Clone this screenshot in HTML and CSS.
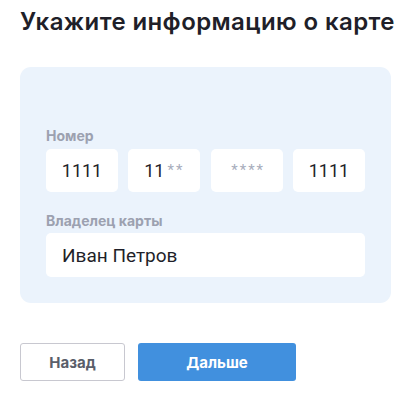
FILE: index.html
```html
<!DOCTYPE html>
<html lang="ru">
<head>
<meta charset="utf-8">
<title>Карта</title>
<link rel="stylesheet" href="styles.css">
</head>
<body>
<main class="page">
  <h1 class="title">Укажите информацию о карте</h1>
  <section class="card">
    <div class="field">
      <div class="label">Номер</div>
      <div class="number-row">
        <div class="input input--center">1111</div>
        <div class="input input--center">11<span class="mask">**</span></div>
        <div class="input input--center"><span class="mask">****</span></div>
        <div class="input input--center">1111</div>
      </div>
    </div>
    <div class="field field--owner">
      <div class="label">Владелец карты</div>
      <div class="input input--wide">Иван Петров</div>
    </div>
  </section>
  <div class="actions">
    <button class="btn btn--back">Назад</button>
    <button class="btn btn--next">Дальше</button>
  </div>
</main>
</body>
</html>
```

FILE: styles.css
```css
* { box-sizing: border-box; }

body {
  margin: 0;
  background: #ffffff;
  font-family: Roboto, "Noto Sans", sans-serif;
  color: #1f1f29;
}

.page {
  padding: 8px 20px 0 20px;
}

.title {
  margin: 0;
  font-family: Inter, Roboto, sans-serif;
  font-size: 24px;
  line-height: 28px;
  font-weight: 600;
  letter-spacing: 0.4px;
  color: #1f1f29;
  white-space: nowrap;
}

.card {
  margin-top: 31px;
  width: 371px;
  background: #ebf3fc;
  border-radius: 11px;
  padding: 61px 26px 26px 26px;
}

.label {
  font-family: Inter, Roboto, sans-serif;
  font-size: 14px;
  line-height: 16px;
  font-weight: 700;
  color: #9ca1b0;
  margin-bottom: 5px;
}

.field--owner {
  margin-top: 21px;
}
.field--owner .label {
  margin-bottom: 4px;
}

.number-row {
  display: grid;
  grid-template-columns: repeat(4, 1fr);
  column-gap: 10.3px;
}

.input {
  height: 43px;
  background: #ffffff;
  border-radius: 5px;
  display: flex;
  align-items: center;
  font-size: 18px;
  color: #1f1f29;
}

.input--center {
  justify-content: center;
}

.input--wide {
  height: 44px;
  padding-left: 16px;
  font-size: 19px;
}

.mask {
  font-size: 15px;
  color: #a8adbc;
  letter-spacing: 2px;
  margin-left: 3px;
  position: relative;
  top: -1px;
}

.actions {
  margin-top: 40px;
  display: flex;
  gap: 13px;
}

.btn {
  height: 38px;
  border-radius: 3px;
  font-family: Inter, Roboto, sans-serif;
  font-size: 15px;
  font-weight: 700;
  cursor: pointer;
}

.btn--back {
  width: 105px;
  background: #ffffff;
  border: 1.5px solid #c8c8d0;
  color: #5a5e6a;
}

.btn--next {
  width: 158px;
  background: #4190de;
  border: none;
  color: #ffffff;
}
```
